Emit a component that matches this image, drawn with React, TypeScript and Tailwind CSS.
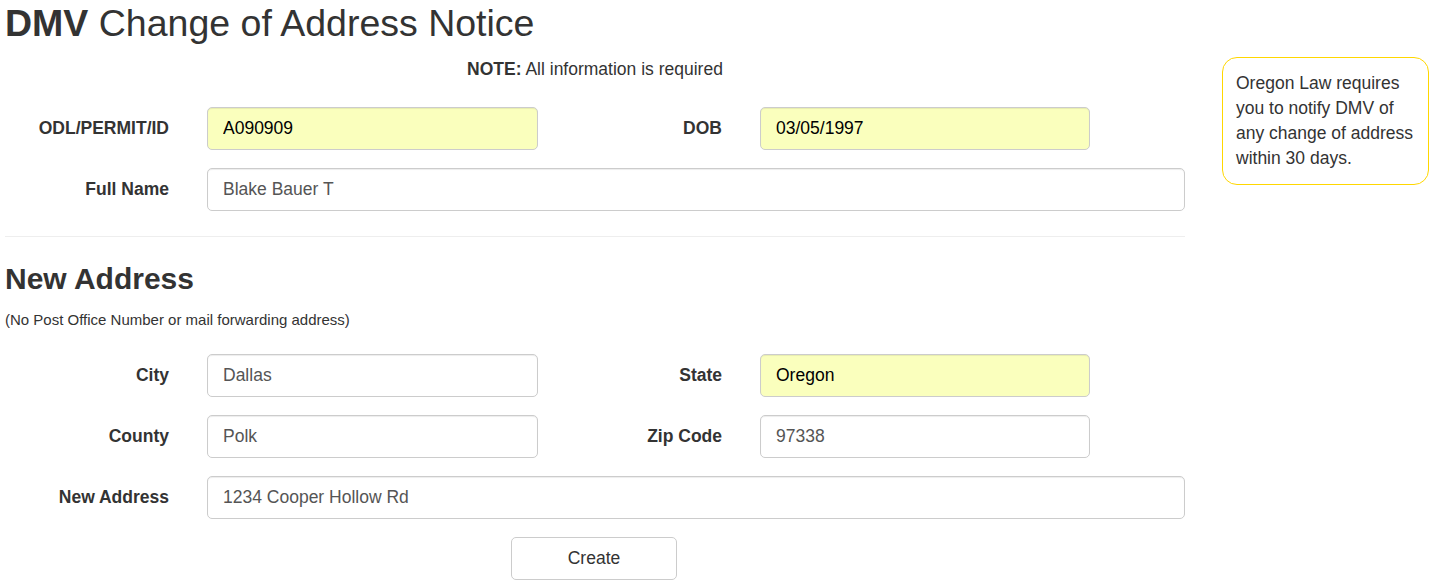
import React from 'react';

const FONT = "font-['Liberation_Sans',Arial,sans-serif]";

function Field({ value, filled, width }: { value: string; filled?: boolean; width: string }) {
  return (
    <input
      readOnly
      value={value}
      className={`${width} h-[43px] rounded-[5px] border border-[#ccc] px-[15px] text-[17.5px] outline-none shadow-[inset_0_1px_1px_rgba(0,0,0,0.075)] ${
        filled ? 'bg-[#faffbd] text-black' : 'bg-white text-[#555]'
      }`}
    />
  );
}

function Label({ children, width }: { children: React.ReactNode; width: string }) {
  return <label className={`${width} shrink-0 text-right font-bold text-[17.5px] pr-[38px]`}>{children}</label>;
}

function App() {
  return (
    <div className={`${FONT} text-[#333] flex w-[1443px] min-h-[587px] bg-white`}>
      <div className="w-[1190px] pl-[5px] pt-[3px] shrink-0">
        <h1 className="text-[37.5px] leading-[41px]">
          <b>DMV</b> Change of Address Notice
        </h1>
        <p className="w-[1180px] text-center text-[17.5px] leading-[25px] mt-[13px]">
          <b>NOTE:</b> All information is required
        </p>

        <div className="mt-[25px]">
          <div className="flex items-center mb-[18px]">
            <Label width="w-[202px]">ODL/PERMIT/ID</Label>
            <Field value="A090909" filled width="w-[331px]" />
            <Label width="w-[222px]">DOB</Label>
            <Field value="03/05/1997" filled width="w-[330px]" />
          </div>
          <div className="flex items-center">
            <Label width="w-[202px]">Full Name</Label>
            <Field value="Blake Bauer T" width="w-[978px]" />
          </div>
        </div>

        <hr className="w-[1180px] mt-[25px] border-0 border-t border-[#eee]" />

        <h2 className="text-[30px] leading-[33px] font-bold mt-[25px]">New Address</h2>
        <p className="text-[15px] leading-[21px] mt-[14px]">(No Post Office Number or mail forwarding address)</p>

        <div className="mt-[24px]">
          <div className="flex items-center mb-[18px]">
            <Label width="w-[202px]">City</Label>
            <Field value="Dallas" width="w-[331px]" />
            <Label width="w-[222px]">State</Label>
            <Field value="Oregon" filled width="w-[330px]" />
          </div>
          <div className="flex items-center mb-[18px]">
            <Label width="w-[202px]">County</Label>
            <Field value="Polk" width="w-[331px]" />
            <Label width="w-[222px]">Zip Code</Label>
            <Field value="97338" width="w-[330px]" />
          </div>
          <div className="flex items-center">
            <Label width="w-[202px]">New Address</Label>
            <Field value="1234 Cooper Hollow Rd" width="w-[978px]" />
          </div>
        </div>

        <div className="w-[1178px] flex justify-center mt-[18px]">
          <button className="w-[166px] h-[43px] rounded-[5px] border border-[#ccc] bg-white text-[17.5px] text-[#333]">
            Create
          </button>
        </div>
      </div>

      <div className="pl-[32px] pt-[57px]">
        <div className="w-[207px] h-[128px] rounded-[15px] border border-[#ffd700] px-[13px] pt-[13px] text-[17.5px] leading-[25px]">
          Oregon Law requires you to notify DMV of any change of address within 30 days.
        </div>
      </div>
    </div>
  );
}

export default App;
